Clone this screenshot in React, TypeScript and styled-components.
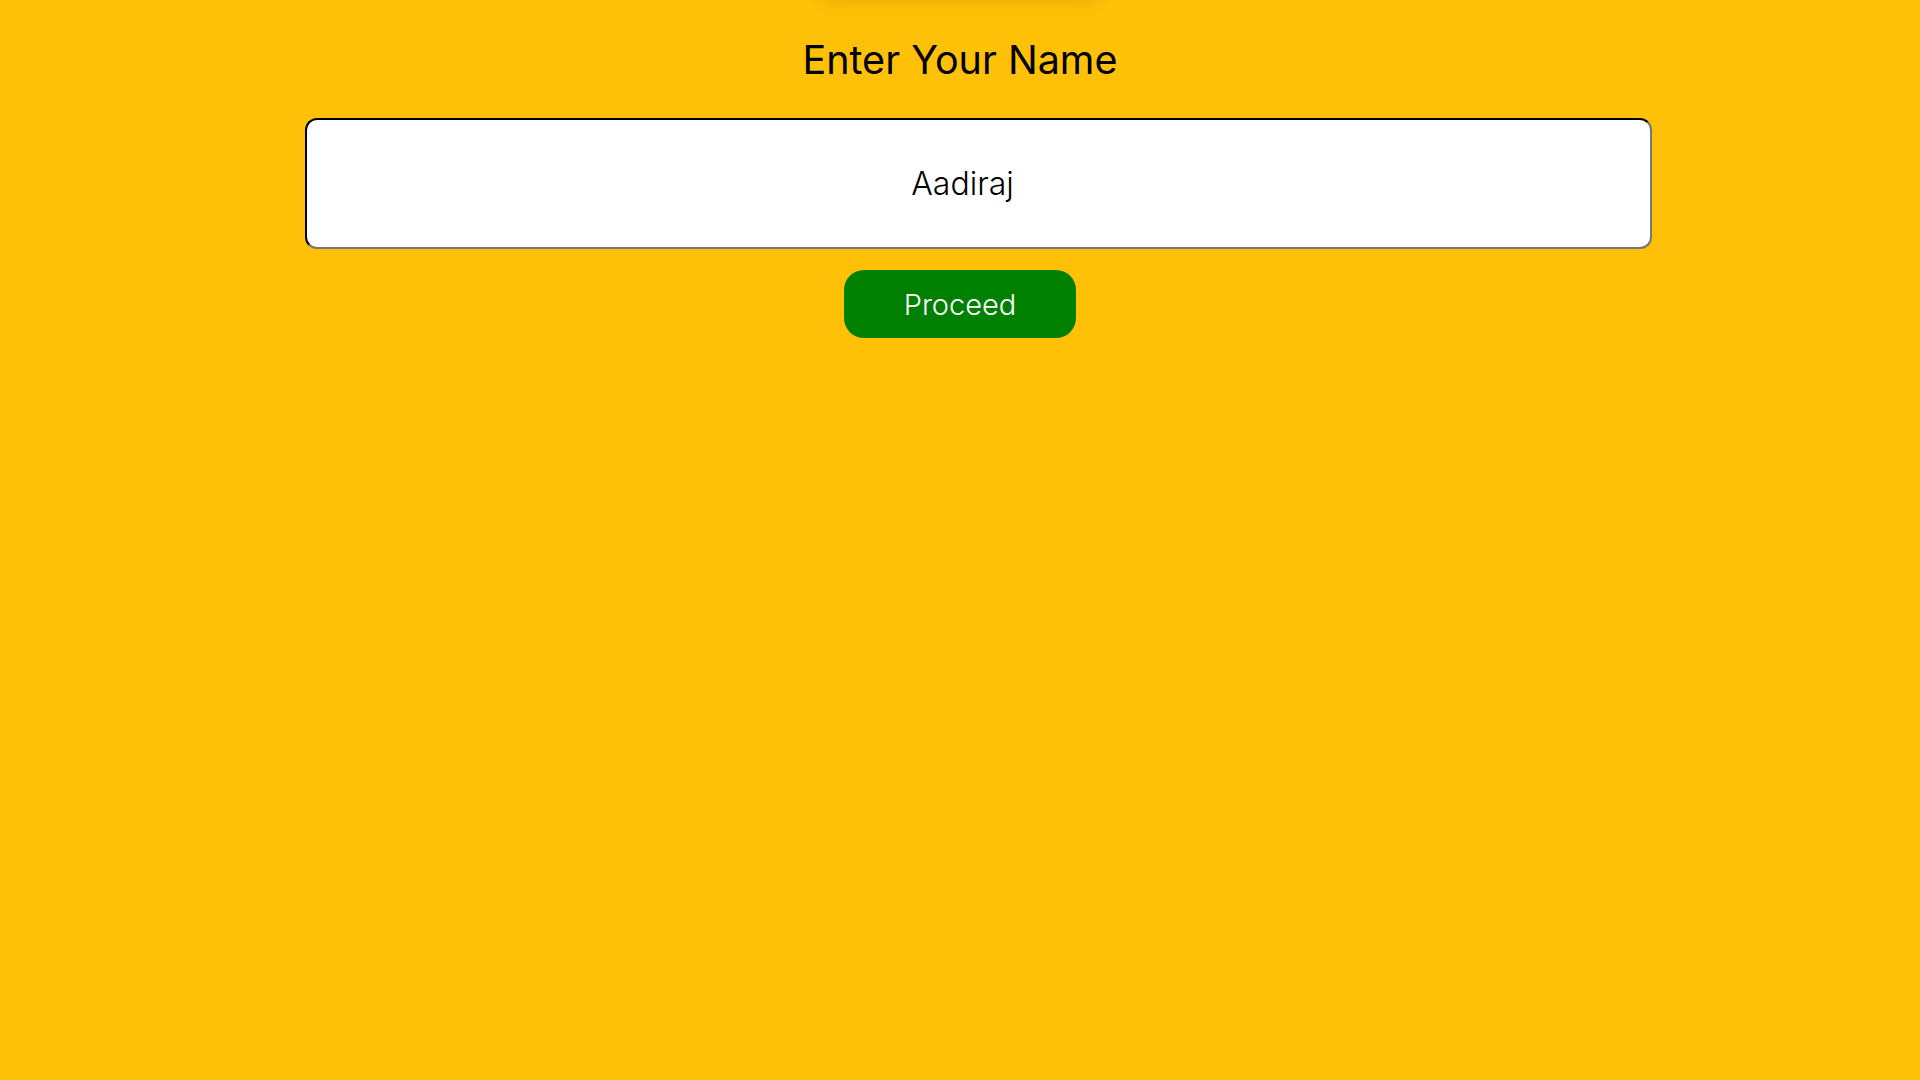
import React, { useState } from "react";
import styled, { createGlobalStyle } from "styled-components";

const GlobalStyle = createGlobalStyle`
  html, body {
    margin: 0;
    padding: 0;
    background: #ffc107;
    font-family: Inter, "Noto Sans", sans-serif;
  }
`;

const Page = styled.main`
  min-height: 100vh;
  background: #ffc107;
  display: flex;
  flex-direction: column;
  align-items: center;
`;

const TopShade = styled.div`
  width: 280px;
  height: 20px;
  margin-top: -20px;
  border-radius: 12px;
  box-shadow: 0 0 18px rgba(0, 0, 0, 0.12);
`;

const Title = styled.h1`
  margin: 36px 0 0;
  font-family: Inter, sans-serif;
  font-size: 39.5px;
  font-weight: 400;
  line-height: 48px;
  color: #000;
`;

const NameInput = styled.input`
  box-sizing: border-box;
  width: 1347px;
  height: 131px;
  margin: 34px 0 0 37px;
  padding: 0 32px 0 0;
  border: 2px inset #767676;
  border-top-color: #222;
  border-left-color: #222;
  border-radius: 12px;
  background: #fff;
  text-align: center;
  font-family: Inter, sans-serif;
  font-size: 32px;
  font-weight: 300;
  color: #000;
  outline: none;
`;

const ProceedButton = styled.button`
  box-sizing: border-box;
  width: 232px;
  height: 68px;
  margin-top: 21px;
  border: none;
  border-radius: 20px;
  background: #008000;
  color: #fff;
  font-family: Inter, sans-serif;
  font-size: 29px;
  font-weight: 300;
  cursor: pointer;
`;

export default function App() {
  const [name, setName] = useState("Aadiraj");
  return (
    <>
      <GlobalStyle />
      <Page>
        <TopShade />
        <Title>Enter Your Name</Title>
        <NameInput value={name} onChange={(e) => setName(e.target.value)} />
        <ProceedButton>Proceed</ProceedButton>
      </Page>
    </>
  );
}
